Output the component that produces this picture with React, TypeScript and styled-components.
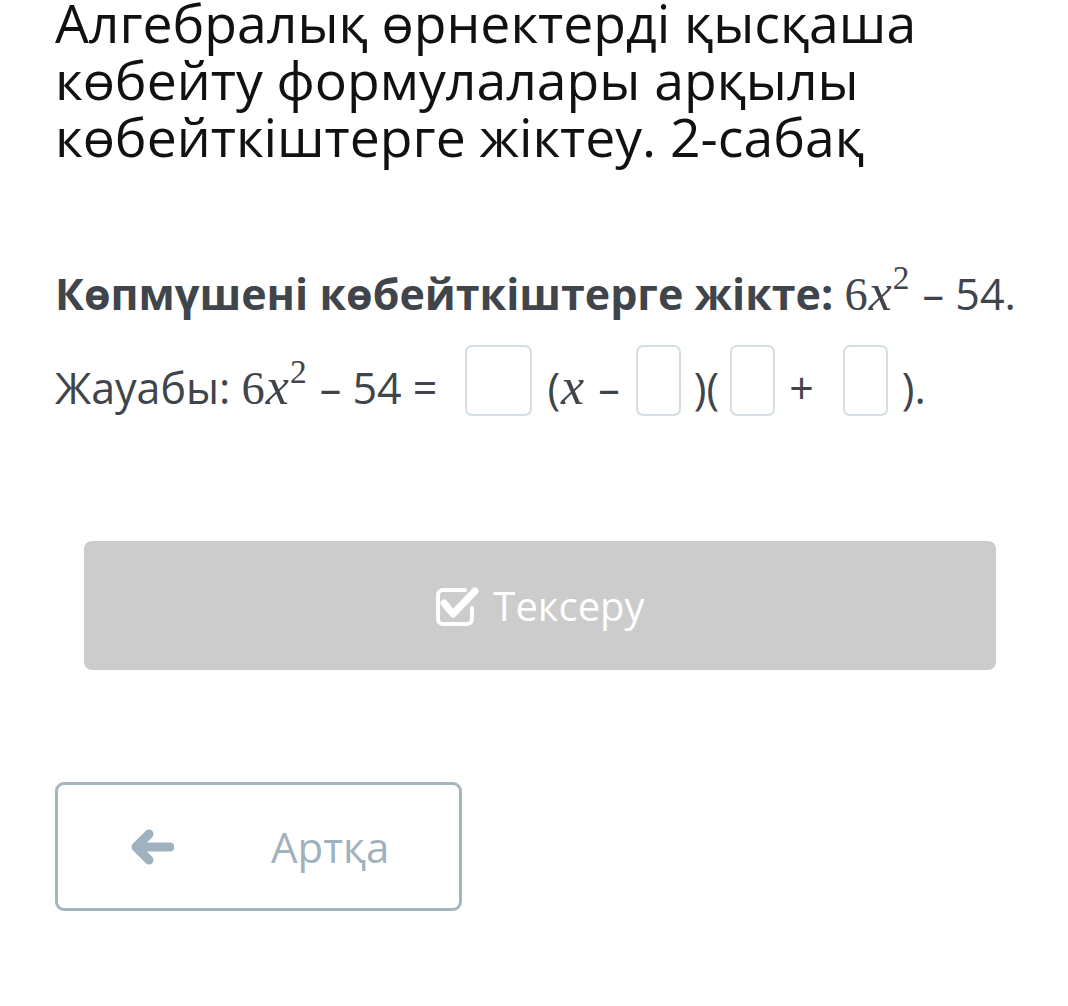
import React from "react";
import styled, { createGlobalStyle } from "styled-components";

const Global = createGlobalStyle`
  html, body { margin: 0; padding: 0; background: #ffffff; }
  body { font-family: "Open Sans", "Noto Sans", sans-serif; }
`;

const Page = styled.div`
  width: 1068px;
  height: 1006px;
  overflow: hidden;
  box-sizing: border-box;
  padding: 0 0 0 55px;
  display: flex;
  flex-direction: column;
`;

const Title = styled.h1`
  margin: -6px 0 0 0;
  font-weight: 400;
  font-size: 53.5px;
  line-height: 57px;
  color: #111111;
  width: 940px;
`;

const Question = styled.p`
  margin: 100px 0 0 0;
  font-size: 43px;
  line-height: 56px;
  color: #3f454b;
  white-space: nowrap;
`;

const Strong = styled.b`
  font-weight: 700;
`;

const MathExpr = styled.span`
  font-family: "Liberation Serif", "DejaVu Serif", serif;
  font-size: 1.08em;
  margin-right: 2px;
`;

const MathVar = styled.i`
  font-style: italic;
  font-size: 1.12em;
  padding: 0 1px;
`;

const Sup = styled.sup`
  font-size: 0.72em;
  line-height: 0;
  vertical-align: 0.62em;
`;

const AnswerRow = styled.div`
  margin-top: 22px;
  display: flex;
  align-items: center;
  font-size: 43px;
  color: #3f454b;
  height: 71px;
`;

const Piece = styled.span<{ $ml?: number }>`
  margin-left: ${(p) => p.$ml ?? 0}px;
  padding-top: 14px;
  white-space: pre;
  line-height: 57px;
`;

const Box = styled.span<{ $w: number; $ml: number }>`
  display: block;
  flex: none;
  box-sizing: border-box;
  width: ${(p) => p.$w}px;
  height: 71px;
  margin-left: ${(p) => p.$ml}px;
  border: 2px solid #d3dfe2;
  border-radius: 7px;
  background: #ffffff;
`;

const CheckButton = styled.button`
  margin: 125px 0 0 29px;
  width: 912px;
  height: 129px;
  flex: none;
  border: none;
  border-radius: 8px;
  background: #cccccc;
  color: #ffffff;
  font-family: "Open Sans", sans-serif;
  font-size: 40px;
  display: flex;
  align-items: center;
  justify-content: center;
  gap: 14px;
  padding: 0;
`;

const BackButton = styled.button`
  margin: 112px 0 0 0;
  width: 407px;
  height: 129px;
  flex: none;
  box-sizing: border-box;
  border: 3px solid #a6b6be;
  border-radius: 9px;
  background: #ffffff;
  color: #9fb2bd;
  font-family: "Open Sans", sans-serif;
  font-size: 42px;
  display: flex;
  align-items: center;
  padding: 0 0 0 72px;
`;

const BackLabel = styled.span`
  margin-left: 97px;
`;

const CheckIcon = () => (
  <svg width="44" height="40" viewBox="0 0 44 40" fill="none">
    <path
      d="M30 4H8a5 5 0 0 0-5 5v24a5 5 0 0 0 5 5h24a5 5 0 0 0 5-5V22"
      stroke="#ffffff"
      strokeWidth="4"
      strokeLinecap="round"
    />
    <path
      d="M9 17l9 11L40 5"
      stroke="#ffffff"
      strokeWidth="7"
      strokeLinecap="round"
      strokeLinejoin="round"
    />
  </svg>
);

const ArrowIcon = () => (
  <svg width="44" height="36" viewBox="0 0 44 36" fill="none">
    <path
      d="M40 18H8M19 5L6 18l13 13"
      stroke="#9fb2bd"
      strokeWidth="9"
      strokeLinecap="round"
      strokeLinejoin="round"
    />
  </svg>
);

const SixX = () => (
  <MathExpr>
    6<MathVar>x</MathVar>
    <Sup>2</Sup>
  </MathExpr>
);

export default function App() {
  return (
    <>
      <Global />
      <Page>
        <Title>
          Алгебралық өрнектерді қысқаша көбейту формулалары арқылы
          көбейткіштерге жіктеу. 2-сабақ
        </Title>
        <Question>
          <Strong>Көпмүшені көбейткіштерге жікте:</Strong> <SixX /> – 54.
        </Question>
        <AnswerRow>
          <Piece>
            Жауабы: <SixX /> – 54 =
          </Piece>
          <Box $w={67} $ml={28} />
          <Piece $ml={15}>
            (
            <MathExpr>
              <MathVar>x</MathVar>
            </MathExpr>{" "}
            –
          </Piece>
          <Box $w={45} $ml={16} />
          <Piece $ml={13}>)(</Piece>
          <Box $w={45} $ml={11} />
          <Piece $ml={14}>+</Piece>
          <Box $w={45} $ml={29} />
          <Piece $ml={14}>).</Piece>
        </AnswerRow>
        <CheckButton>
          <CheckIcon />
          <span>Тексеру</span>
        </CheckButton>
        <BackButton>
          <ArrowIcon />
          <BackLabel>Артқа</BackLabel>
        </BackButton>
      </Page>
    </>
  );
}
